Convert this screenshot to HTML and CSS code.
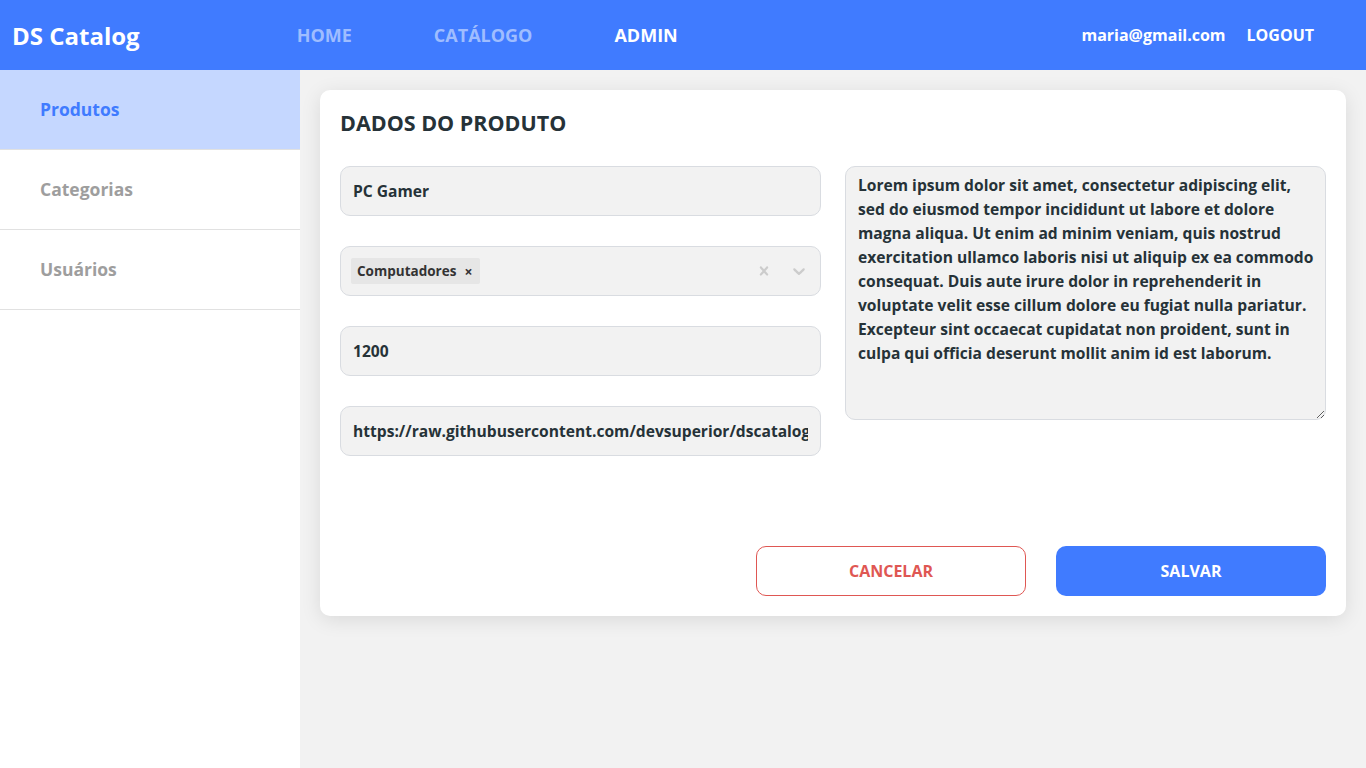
FILE: index.html
```html
<!DOCTYPE html>
<html lang="pt-BR">
<head>
<meta charset="utf-8">
<title>DS Catalog</title>
<link rel="stylesheet" href="styles.css">
</head>
<body>
<header class="navbar">
  <a class="logo" href="#">DS Catalog</a>
  <nav class="main-nav">
    <a href="#" class="nav-link">HOME</a>
    <a href="#" class="nav-link">CATÁLOGO</a>
    <a href="#" class="nav-link active">ADMIN</a>
  </nav>
  <div class="user-area">
    <span class="user-email">maria@gmail.com</span>
    <a href="#" class="logout">LOGOUT</a>
  </div>
</header>
<div class="layout">
  <aside class="sidebar">
    <a href="#" class="side-item active">Produtos</a>
    <a href="#" class="side-item">Categorias</a>
    <a href="#" class="side-item">Usuários</a>
  </aside>
  <main class="content">
    <section class="card">
      <h1 class="card-title">DADOS DO PRODUTO</h1>
      <div class="form-grid">
        <div class="form-col">
          <input class="field" type="text" value="PC Gamer">
          <div class="select field">
            <span class="chip">Computadores <span class="chip-x">×</span></span>
            <span class="indicators">
              <svg class="ind ind-clear" width="20" height="20" viewBox="0 0 20 20"><path d="M14.348 14.849c-.469.469-1.229.469-1.697 0L10 11.819l-2.651 3.029c-.469.469-1.229.469-1.697 0-.469-.469-.469-1.229 0-1.697l2.758-3.15-2.759-3.152c-.469-.469-.469-1.228 0-1.697.469-.469 1.228-.469 1.697 0L10 8.183l2.651-3.031c.469-.469 1.228-.469 1.697 0 .469.469.469 1.229 0 1.697l-2.758 3.152 2.758 3.15c.469.469.469 1.229 0 1.698z" fill="#cccccc"/></svg>
              <svg class="ind" width="20" height="20" viewBox="0 0 20 20"><path d="M4.516 7.548c.436-.446 1.043-.481 1.576 0L10 11.295l3.908-3.747c.533-.481 1.141-.446 1.574 0 .436.445.408 1.197 0 1.615-.406.418-4.695 4.502-4.695 4.502-.217.223-.502.335-.787.335s-.57-.112-.789-.335c0 0-4.287-4.084-4.695-4.502s-.436-1.17 0-1.615z" fill="#cccccc"/></svg>
            </span>
          </div>
          <input class="field" type="text" value="1200">
          <input class="field" type="text" value="https://raw.githubusercontent.com/devsuperior/dscatalog-resources/master/backend/img/1-big.jpg">
        </div>
        <div class="form-col">
          <textarea class="field textarea">Lorem ipsum dolor sit amet, consectetur adipiscing elit, sed do eiusmod tempor incididunt ut labore et dolore magna aliqua. Ut enim ad minim veniam, quis nostrud exercitation ullamco laboris nisi ut aliquip ex ea commodo consequat. Duis aute irure dolor in reprehenderit in voluptate velit esse cillum dolore eu fugiat nulla pariatur. Excepteur sint occaecat cupidatat non proident, sunt in culpa qui officia deserunt mollit anim id est laborum.</textarea>
        </div>
      </div>
      <div class="actions">
        <button class="btn btn-cancel">CANCELAR</button>
        <button class="btn btn-save">SALVAR</button>
      </div>
    </section>
  </main>
</div>
</body>
</html>
```
FILE: styles.css
```css
* { box-sizing: border-box; }
html, body { margin: 0; padding: 0; }
body {
  font-family: "Open Sans", "Liberation Sans", sans-serif;
  background: #F2F2F2;
  color: #263238;
  min-height: 768px;
}
a { text-decoration: none; }

.navbar {
  height: 70px;
  background: #407BFF;
  display: flex;
  align-items: center;
  padding: 0 52px 0 12px;
}
.logo {
  color: #fff;
  font-size: 24px;
  font-weight: 700;
}
.main-nav {
  display: flex;
  gap: 82px;
  margin-left: 157px;
}
.nav-link {
  font-size: 18px;
  font-weight: 700;
  color: #9FBDFF;
}
.nav-link.active { color: #fff; }
.user-area {
  margin-left: auto;
  display: flex;
  gap: 21px;
  align-items: center;
}
.user-email, .logout {
  color: #fff;
  font-size: 16px;
  font-weight: 700;
}
.user-email { margin-left: 1px; }

.layout {
  display: flex;
  min-height: 698px;
}
.sidebar {
  width: 300px;
  background: #fff;
  display: flex;
  flex-direction: column;
  flex-shrink: 0;
}
.side-item {
  height: 80px;
  display: flex;
  align-items: center;
  padding-left: 40px;
  padding-bottom: 2px;
  font-size: 17.5px;
  font-weight: 700;
  color: #9E9E9E;
  border-bottom: 1px solid #E1E1E1;
}
.side-item.active {
  background: #C5D7FF;
  color: #407BFF;
}

.content {
  flex: 1;
  padding: 20px;
}
.card {
  background: #fff;
  border-radius: 10px;
  box-shadow: 0 4px 20px rgba(0, 0, 0, 0.1);
  padding: 20px;
  height: 526px;
  display: flex;
  flex-direction: column;
}
.card-title {
  margin: 0;
  font-size: 21.5px;
  font-weight: 700;
  color: #263238;
  line-height: 26px;
}
.form-grid {
  display: flex;
  gap: 24px;
  margin-top: 30px;
}
.form-col {
  flex: 1;
  display: flex;
  flex-direction: column;
  gap: 30px;
}
.field {
  height: 50px;
  width: 100%;
  background: #F2F2F2;
  border: 1px solid #D9DCE1;
  border-radius: 10px;
  padding: 0 12px;
  font-family: "Open Sans", "Liberation Sans", sans-serif;
  font-size: 15.6px;
  font-weight: 700;
  color: #263238;
  outline: none;
}
.select {
  display: flex;
  align-items: center;
  padding: 0 10px;
}
.chip {
  background: #E6E6E6;
  border-radius: 2px;
  font-size: 13.5px;
  font-weight: 700;
  color: #333;
  padding: 0 8px 0 6px;
  display: flex;
  align-items: center;
  gap: 8px;
  height: 26px;
}
.chip-x {
  font-size: 14px;
  font-weight: 700;
}
.indicators {
  margin-left: auto;
  display: flex;
  gap: 16px;
  align-items: center;
  margin-right: 1px;
}
.ind { width: 20px; height: 20px; }
.ind-clear { width: 18px; height: 18px; }
.textarea {
  height: 254px;
  padding: 6px 6px 6px 12px;
  line-height: 24px;
  resize: vertical;
}
.actions {
  margin-top: auto;
  display: flex;
  justify-content: flex-end;
  gap: 30px;
}
.btn {
  width: 270px;
  height: 50px;
  border-radius: 10px;
  font-family: "Open Sans", "Liberation Sans", sans-serif;
  font-size: 16px;
  font-weight: 700;
  cursor: pointer;
}
.btn-cancel {
  background: #fff;
  border: 1px solid #DF5753;
  color: #DF5753;
}
.btn-save {
  background: #407BFF;
  border: none;
  color: #fff;
}
```
